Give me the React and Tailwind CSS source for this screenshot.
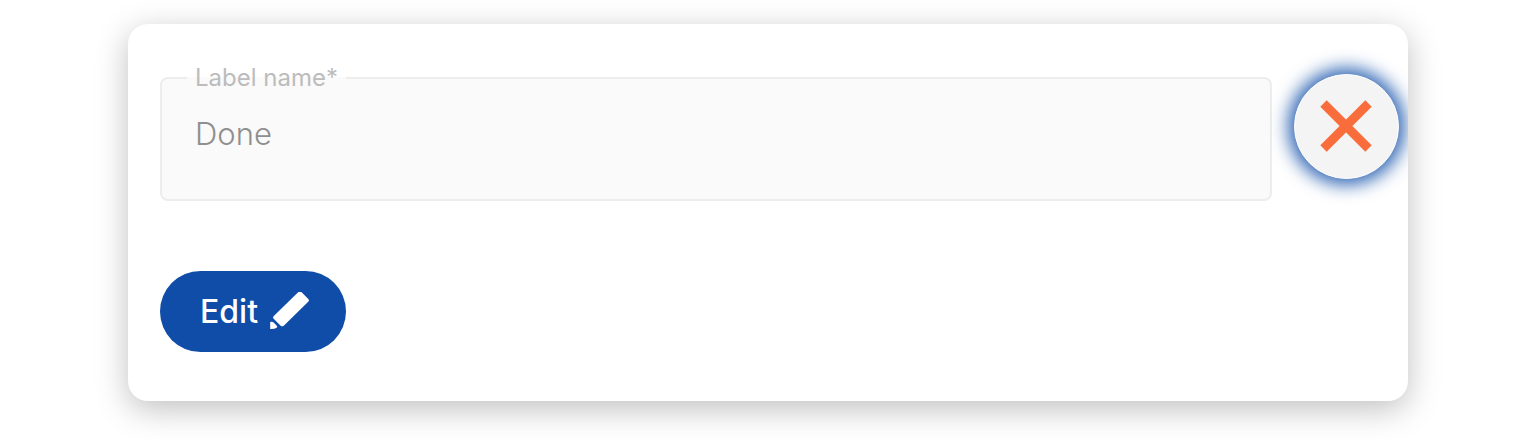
import React, { useState } from 'react';

const CloseIcon = () => (
    <svg className="w-[53px] h-[53px]" viewBox="0 0 53 53" fill="none" aria-hidden="true">
        <path d="M3.5 3.5L48.5 48.5M48.5 3.5L3.5 48.5" stroke="#f96c3c" strokeWidth="9" />
    </svg>
);

const PencilIcon = () => (
    <svg className="w-10 h-10" viewBox="0 0 40 40" fill="currentColor" aria-hidden="true">
        <path d="M28.4 -.8Q29.9 -2.2 31.4 -.8L38.3 6Q39.6 7.4 38.2 8.8L14 32.6Q12.2 34.2 10.7 32.8L3.7 25.9Q2.4 24.5 3.8 23.1Z" transform="translate(0 .9)" />
        <path d="M.2 30Q2 29.2 3.6 30.6L7 34Q7.9 35.2 6.2 36Q4.4 37.2 .2 37Z" />
    </svg>
);

const LabelField = ({ value, onChange, disabled }) => (
    <fieldset className="flex-1 min-w-0 h-[135px] rounded-lg border-2 border-[#ededed] bg-[#fafafa] px-[33px]">
        <legend className="-ml-2 px-2 text-[24px] leading-6 font-normal text-[#bcbcbc]">
            <label htmlFor="label-name">Label name*</label>
        </legend>
        <input
            id="label-name"
            type="text"
            required
            disabled={disabled}
            value={value}
            onChange={(e) => onChange(e.target.value)}
            className="block w-full mt-6 bg-transparent text-[31px] leading-10 font-light text-[#8f8f8f] outline-none"
        />
    </fieldset>
);

const App = () => {
    const [name, setName] = useState('Done');
    const [isEditing, setIsEditing] = useState(false);

    return (
        <main className="min-h-screen px-32 py-6 bg-white font-['Inter',sans-serif]">
            <form
                onSubmit={(e) => e.preventDefault()}
                className="overflow-hidden rounded-[20px] bg-white pt-[42px] pb-[49px] pl-8 pr-[9px] shadow-[0_8px_32px_rgba(0,0,0,0.25)]"
            >
                <div className="flex items-start gap-[22px]">
                    <LabelField value={name} onChange={setName} disabled={!isEditing} />
                    <button
                        type="button"
                        aria-label="Close"
                        onClick={() => setIsEditing(false)}
                        className="mt-2 w-[105px] h-[105px] shrink-0 rounded-full border border-white bg-[#f4f4f4] flex items-center justify-center shadow-[0_0_17px_6px_rgba(15,77,168,0.85)]"
                    >
                        <CloseIcon />
                    </button>
                </div>

                <button
                    type="button"
                    onClick={() => setIsEditing(true)}
                    className="mt-[70px] h-[81px] rounded-full bg-[#0f4da8] pl-10 pr-9 flex items-center gap-3 text-[32px] leading-10 font-medium text-white"
                >
                    Edit
                    <PencilIcon />
                </button>
            </form>
        </main>
    );
};

export default App;
